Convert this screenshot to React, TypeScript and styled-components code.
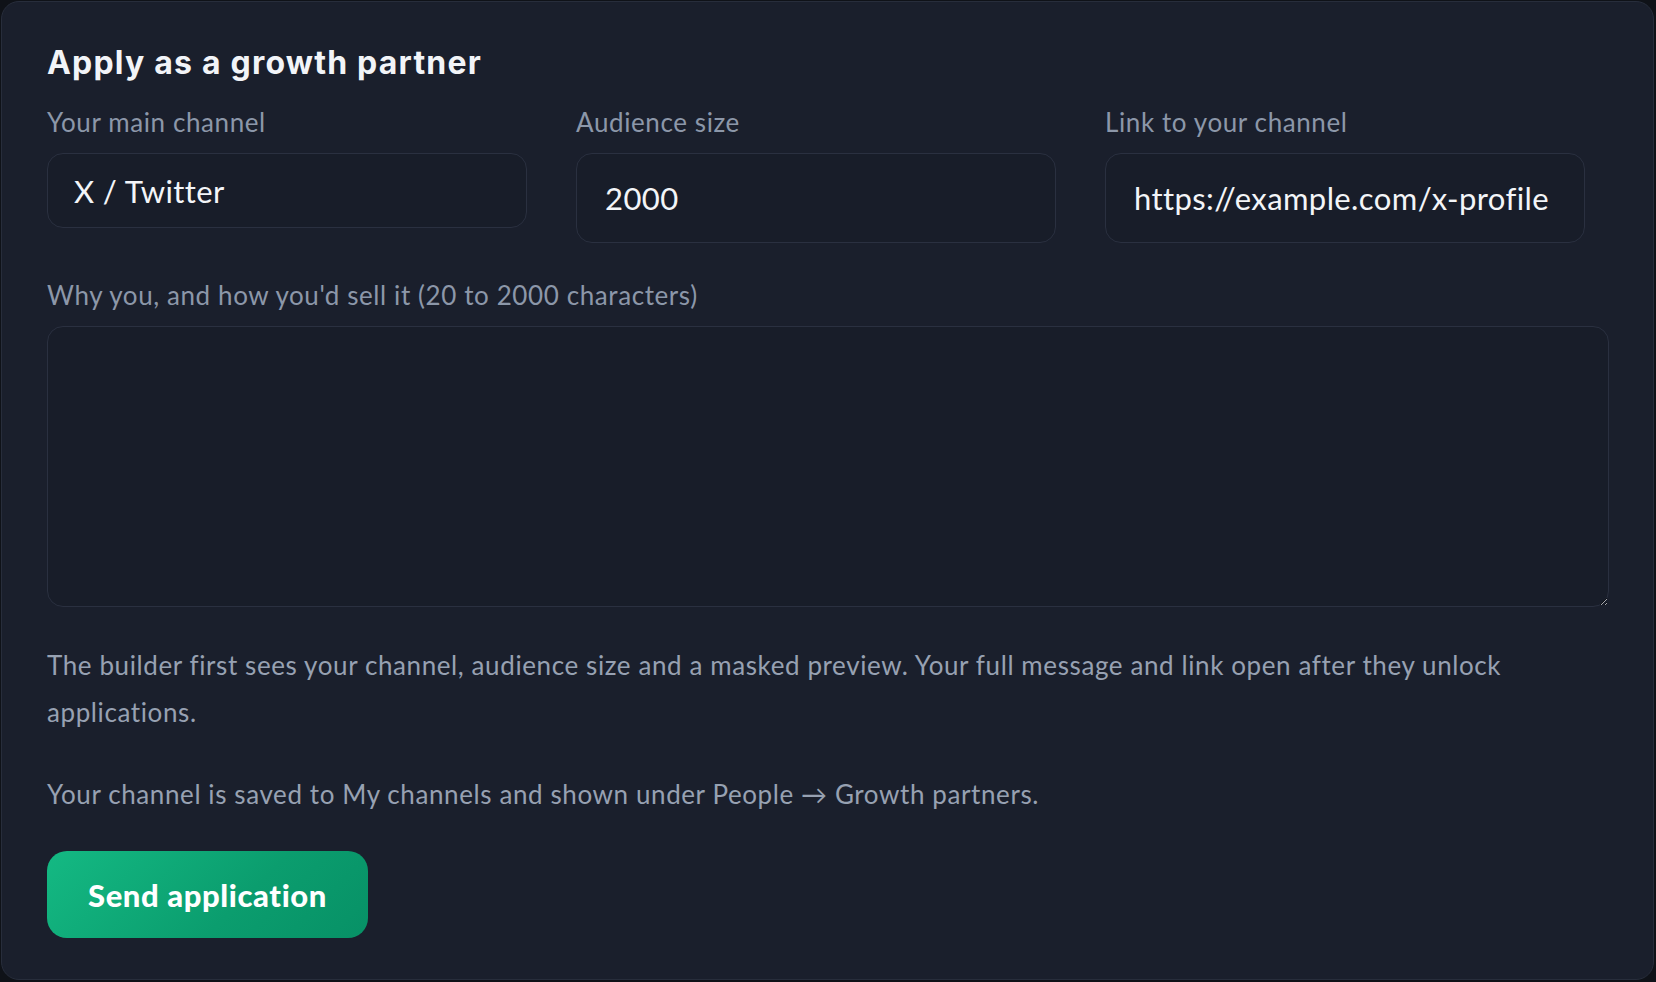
import React from 'react'
import styled, { createGlobalStyle } from 'styled-components'

const GlobalStyle = createGlobalStyle`
  * {
    box-sizing: border-box;
    margin: 0;
    padding: 0;
  }
  html, body {
    background: #0f1218;
  }
  body {
    font-family: Lato, "Noto Sans", sans-serif;
    -webkit-font-smoothing: antialiased;
  }
`

const Page = styled.div`
  padding: 1px 2px 2px 1px;
  min-height: 100vh;
  display: flex;
`

const Card = styled.section`
  flex: 1;
  background: #1a1f2c;
  border: 1px solid #272d3b;
  border-radius: 18px;
  padding: 41px 44px 39px 45px;
  display: flex;
  flex-direction: column;
`

const Title = styled.h1`
  font-family: Inter, "Noto Sans", sans-serif;
  font-weight: 700;
  font-size: 32px;
  line-height: 40px;
  letter-spacing: 1.2px;
  color: #f2f4f8;
  margin-bottom: 24px;
`

const FieldRow = styled.div`
  display: grid;
  grid-template-columns: repeat(3, 480px);
  column-gap: 49px;
  align-items: start;
`

const Field = styled.label<{ $top?: number }>`
  display: flex;
  flex-direction: column;
  gap: 15px;
  margin-top: ${p => (p.$top ? p.$top + 'px' : '0')};
`

const LabelText = styled.span`
  font-size: 26px;
  line-height: 31px;
  letter-spacing: 0.6px;
  color: #8c97a9;
`

const controlBase = `
  width: 100%;
  background: #181d29;
  border: 1px solid #2a3040;
  border-radius: 16px;
  color: #f3f5f8;
  font-family: Lato, "Noto Sans", sans-serif;
  font-size: 31px;
  letter-spacing: 0.4px;
  outline: none;
`

const Select = styled.select`
  ${controlBase}
  appearance: none;
  height: 75px;
  padding: 0 26px;
`

const TextInput = styled.input`
  ${controlBase}
  height: 90px;
  padding: 0 26px 0 28px;
`

const TextArea = styled.textarea`
  ${controlBase}
  height: 281px;
  padding: 20px 26px;
  resize: vertical;
`

const Note = styled.p<{ $top: number }>`
  font-size: 26px;
  line-height: 47px;
  letter-spacing: 0.6px;
  color: #97a1b2;
  margin-top: ${p => p.$top}px;
`

const SendButton = styled.button`
  align-self: flex-start;
  margin-top: 33px;
  width: 321px;
  height: 87px;
  border: none;
  border-radius: 20px;
  background: linear-gradient(135deg, #14b983 0%, #0b9d6e 60%, #079166 100%);
  color: #ffffff;
  font-family: Lato, "Noto Sans", sans-serif;
  font-weight: 900;
  font-size: 31px;
  letter-spacing: 0.6px;
  cursor: pointer;
`

export default function App() {
  return (
    <Page>
      <GlobalStyle />
      <Card>
        <Title>Apply as a growth partner</Title>
        <FieldRow>
          <Field>
            <LabelText>Your main channel</LabelText>
            <Select defaultValue="x">
              <option value="x">X / Twitter</option>
            </Select>
          </Field>
          <Field>
            <LabelText>Audience size</LabelText>
            <TextInput type="text" defaultValue="2000" />
          </Field>
          <Field>
            <LabelText>Link to your channel</LabelText>
            <TextInput type="text" defaultValue="https://example.com/x-profile" />
          </Field>
        </FieldRow>
        <Field $top={37}>
          <LabelText>Why you, and how you'd sell it (20 to 2000 characters)</LabelText>
          <TextArea />
        </Field>
        <Note $top={35}>
          The builder first sees your channel, audience size and a masked preview. Your full message and link
          open after they unlock applications.
        </Note>
        <Note $top={35}>Your channel is saved to My channels and shown under People → Growth partners.</Note>
        <SendButton type="button">Send application</SendButton>
      </Card>
    </Page>
  )
}
